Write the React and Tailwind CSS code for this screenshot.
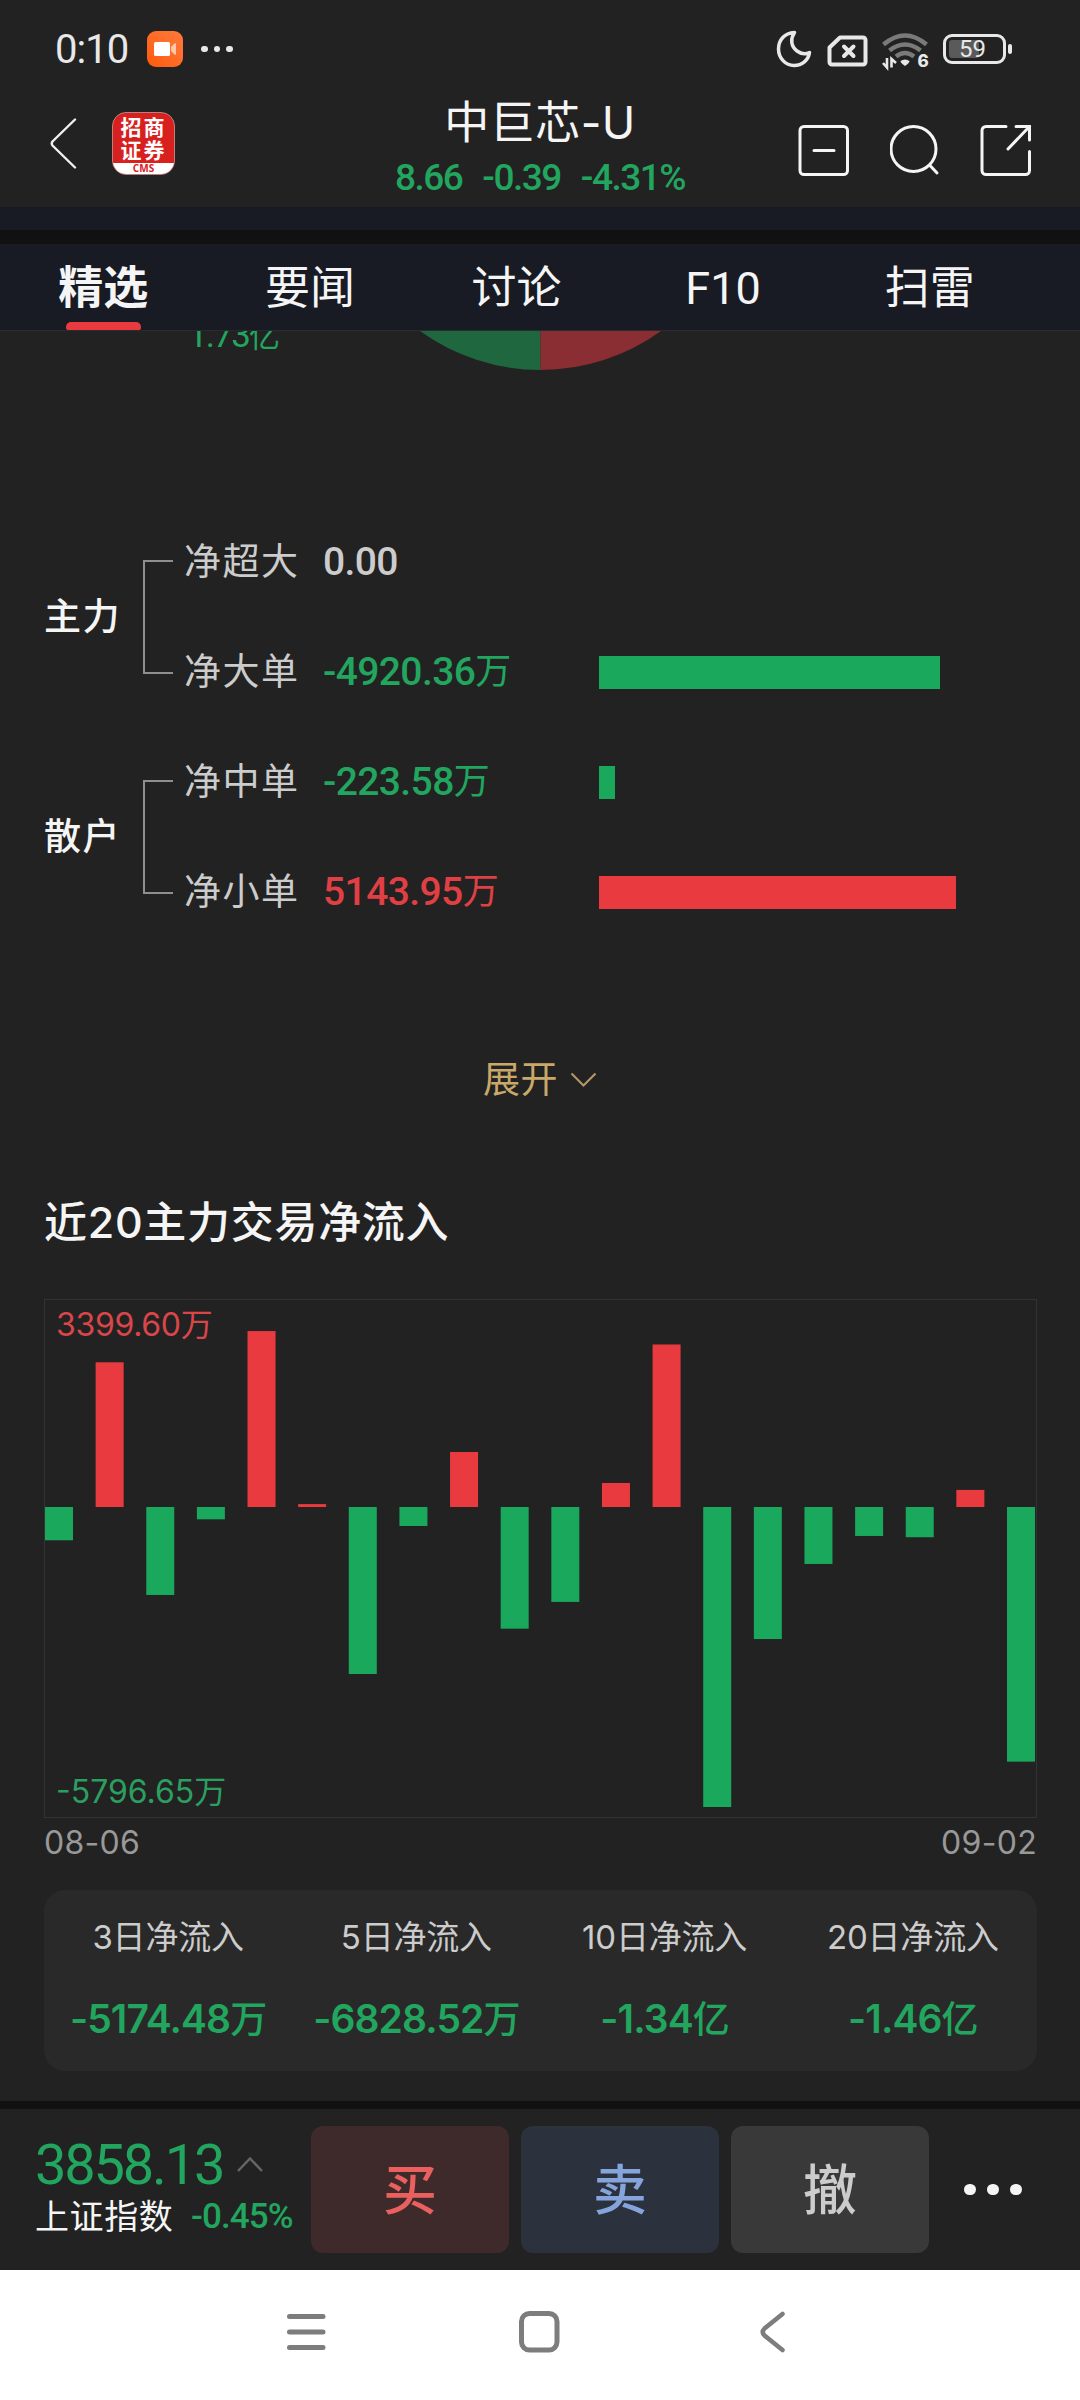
import clsx from "clsx";

const latinFont = "font-['Inter','Noto_Sans_CJK_SC',sans-serif]";
const numberFont = "font-['Roboto','Noto_Sans_CJK_SC',sans-serif]";

const tabs = ["精选", "要闻", "讨论", "F10", "扫雷"];

// Amounts are in 万, bar widths in px.
const orderGroups = [
  {
    name: "主力",
    rows: [
      { label: "净超大", value: "0.00", tone: "flat", bar: 0 },
      { label: "净大单", value: "-4920.36", unit: "万", tone: "down", bar: 341 },
    ],
  },
  {
    name: "散户",
    rows: [
      { label: "净中单", value: "-223.58", unit: "万", tone: "down", bar: 16 },
      { label: "净小单", value: "5143.95", unit: "万", tone: "up", bar: 357 },
    ],
  },
];

const dailyFlow = [
  -643, 2796, -1700, -238, 3399.6, 56, -3227, -367, 1063, -2351, -1834, 464, 3140, -5796.65, -2551, -1101, -560,
  -584, 330, -4920.36,
];

const totals = [
  { label: "3日净流入", value: "-5174.48", unit: "万" },
  { label: "5日净流入", value: "-6828.52", unit: "万" },
  { label: "10日净流入", value: "-1.34", unit: "亿" },
  { label: "20日净流入", value: "-1.46", unit: "亿" },
];

const toneText = {
  up: "text-[#e04044]",
  down: "text-[#22a55e]",
  flat: "text-[#cccccc]",
};

const toneBar = {
  up: "bg-[#e93b3f]",
  down: "bg-[#19a85c]",
  flat: "bg-transparent",
};

function StatusBar() {
  return (
    <div className="flex h-[98px] items-center pl-[55px] pr-[68px] text-[#e8e8e8]">
      <span className={clsx(numberFont, "mt-[2px] w-[92px] text-[40px] leading-none tracking-[-1px]")}>0:10</span>
      <span className="flex h-[36px] w-[36px] items-center justify-center rounded-[9px] bg-gradient-to-tr from-[#ff5a00] to-[#ff7a3a]">
        <svg width="24" height="16" viewBox="0 0 24 16">
          <rect x="1" y="1" width="16" height="14" rx="1.500" fill="#fff" />
          <path d="M18 6l4-4a1 1 0 0 1 1 1v10a1 1 0 0 1-1 1l-4-4z" fill="#ffc9a8" />
        </svg>
      </span>
      <span className="ml-[18px] flex gap-[6px]">
        <i className="size-[6.5px] rounded-full bg-[#e8e8e8]" />
        <i className="size-[6.5px] rounded-full bg-[#e8e8e8]" />
        <i className="size-[6.5px] rounded-full bg-[#e8e8e8]" />
      </span>

      <div className="ml-auto flex items-center">
        <svg width="36" height="38" viewBox="0 0 36 38" fill="none">
          <path
            d="M18.500 2.500C8 3 2.500 10.500 2.500 19c0 9 7 16.500 15.500 16.500 8 0 14.500-5.500 15.500-13-3.500 1.800-8.500 1.500-12.500-1.500-6-4.500-7-12-2.500-18.500z"
            stroke="#e8e8e8"
            strokeWidth="3.500"
            strokeLinejoin="round"
          />
        </svg>
        <svg className="ml-[15px] mt-[3px]" width="41" height="32" viewBox="0 0 41 32" fill="none">
          <path
            d="M13 2.500H36a2.500 2.500 0 0 1 2.500 2.500v22a2.500 2.500 0 0 1-2.500 2.500H5A2.500 2.500 0 0 1 2.500 27V12.500z"
            stroke="#e8e8e8"
            strokeWidth="4"
            strokeLinejoin="round"
          />
          <path d="M17 11.500l9.500 9.500M26.500 11.500l-9.500 9.500" stroke="#e8e8e8" strokeWidth="4" strokeLinecap="round" />
        </svg>
        <svg className="ml-[13px] mt-[3px] overflow-visible" width="48" height="37" viewBox="0 0 48 37" fill="none">
          <path d="M2.500 12.500Q24-5.500 45.500 12.500" stroke="#7a7a7a" strokeWidth="4.500" />
          <path d="M8.500 18.500Q24 6.500 39.500 18.500" stroke="#7a7a7a" strokeWidth="4.500" />
          <path d="M15 24.500Q24 17.500 33 24.500" stroke="#7a7a7a" strokeWidth="4.500" />
          <path d="M19.500 29q4.500-3 9 0q0 2-4.500 5q-4.500-3-4.500-5z" fill="#e8e8e8" />
          <path d="M6 26v9.500l-4-4.500M10.500 35.500V27l4.500 4" stroke="#e8e8e8" strokeWidth="2.600" />
          <text x="36.500" y="35" fill="#e8e8e8" fontSize="17" fontWeight="800" fontFamily="Inter, sans-serif">
            6
          </text>
        </svg>
        <span className="ml-[14px] flex h-[30px] w-[63px] items-center rounded-[9px] border-[3px] border-[#e8e8e8] p-[3px]">
          <i className="h-[18px] w-[30px] rounded-[3px] bg-[#5a5a5a]" />
          <span className={clsx(numberFont, "-ml-[20px] text-[24px] leading-none")}>59</span>
        </span>
        <i className="ml-[2px] h-[10px] w-[4px] rounded-[2px] bg-[#e8e8e8]" />
      </div>
    </div>
  );
}

function BrokerLogo() {
  return (
    <div className="flex h-[63px] w-[63px] flex-col overflow-hidden rounded-[14px] border border-[#b98080] bg-[#d8201f] text-center text-white">
      <div className="h-[50px] pt-[2px] font-['Noto_Sans_CJK_SC',sans-serif] text-[21px] font-bold leading-[23px] tracking-[2px]">
        <p>招商</p>
        <p>证券</p>
      </div>
      <p className="flex-1 bg-white font-['Open_Sans',sans-serif] text-[10px] font-bold leading-[11px] text-[#d8201f]">
        CMS
      </p>
    </div>
  );
}

function Header() {
  return (
    <header className="grid h-[109px] grid-cols-[1fr_auto_1fr] text-[#f5f5f5]">
      <div className="flex items-start pl-[50px] pt-[14px]">
        <svg className="mt-[6px]" width="27" height="51" viewBox="0 0 27 51" fill="none">
          <path
            d="M25 1.500L2.500 23.500q-1.500 2 0 4L25 49.500"
            stroke="#f0f0f0"
            strokeWidth="2.400"
            strokeLinecap="round"
          />
        </svg>
        <span className="ml-[35px]">
          <BrokerLogo />
        </span>
      </div>

      <div className="flex flex-col items-center">
        <h1
          className={clsx(
            latinFont,
            "mt-[2px] h-[46px] whitespace-nowrap text-[45px] leading-[46px] tracking-[0.500px]",
          )}
        >
          中巨芯-U
        </h1>
        <div
          className={clsx(
            numberFont,
            "mt-[11px] flex gap-[20px] whitespace-nowrap text-[37px] font-medium leading-[42px] tracking-[-1.500px] text-[#22a55e]",
          )}
        >
          <span>8.66</span>
          <span>-0.39</span>
          <span>-4.31%</span>
        </div>
      </div>

      <div className="flex items-start justify-end gap-[40px] pr-[48px] pt-[26px]">
        <svg width="52" height="53" viewBox="0 0 52 53" fill="none" stroke="#f5f5f5" strokeWidth="3">
          <rect x="2" y="2.500" width="47.500" height="48" rx="4" />
          <path d="M16 26.500h20" strokeLinecap="round" />
        </svg>
        <svg width="50" height="53" viewBox="0 0 50 53" fill="none" stroke="#f5f5f5" strokeWidth="3">
          <circle cx="23.500" cy="25" r="22.500" />
          <path d="M40 41.500l7 7.500" strokeLinecap="round" />
        </svg>
        <svg
          width="52"
          height="53"
          viewBox="0 0 52 53"
          fill="none"
          stroke="#f5f5f5"
          strokeWidth="3"
          strokeLinecap="round"
        >
          <path d="M26 2.500H6a4 4 0 0 0-4 4v40a4 4 0 0 0 4 4h39.500a4 4 0 0 0 4-4V27.500" />
          <path d="M36 2.500h13.500V16M49.500 2.500L28 25" />
        </svg>
      </div>
    </header>
  );
}

function TabBar() {
  return (
    <nav className="h-[87px] border-b border-[#2a2b2f] bg-[#181b23] pr-[47px]">
      <div className="grid h-full grid-cols-5">
        {tabs.map((tab, index) => (
          <div key={tab} className="flex flex-col items-center justify-between">
            <span
              className={clsx(
                numberFont,
                "h-[78px] pt-[22px] text-[45px] leading-[46px] text-[#f5f5f5]",
                index === 0 && "font-bold",
              )}
            >
              {tab}
            </span>
            {index === 0 ? <i className="h-[8px] w-[75px] rounded-t-[5px] rounded-b-[2px] bg-[#e93b3f]" /> : null}
          </div>
        ))}
      </div>
    </nav>
  );
}

// Bottom edge of the chart that is scrolled under the tab bar.
function PieTail() {
  return (
    <div className="flex h-[39px] items-start overflow-hidden pl-[188px]">
      <div
        className={clsx(numberFont, "-mt-[18px] w-[232px] text-[35px] leading-[46px] tracking-[-1.800px] text-[#22a55e]")}
      >
        1.73<span className="text-[31px]">亿</span>
      </div>
      <svg width="242" height="39" viewBox="0 0 242 39">
        <path d="M0 0A205.700 205.700 0 0 0 120.500 39V0z" fill="#1e673f" />
        <path d="M120.500 0V39A205.700 205.700 0 0 0 241 0z" fill="#8a2e33" />
      </svg>
    </div>
  );
}

function OrderGroup({ name, rows }) {
  return (
    <div className="flex h-[220px] items-center pl-[44px]">
      <strong
        className={clsx(latinFont, "w-[99px] text-[37px] font-medium leading-none tracking-[1.500px] text-[#f5f5f5]")}
      >
        {name}
      </strong>
      <i className="mt-[2px] h-[114px] w-[30px] border-2 border-r-0 border-[#8f8f8f]" />
      <div className="flex-1 pl-[11px]">
        {rows.map((row) => (
          <div key={row.label} className="flex h-[110px] items-center">
            <span className={clsx(latinFont, "w-[139px] text-[37px] leading-none tracking-[1.500px] text-[#cccccc]")}>
              {row.label}
            </span>
            <span
              className={clsx(
                numberFont,
                "mt-[2px] flex w-[276px] items-center text-[39px] font-medium leading-none tracking-[-0.600px]",
                toneText[row.tone],
              )}
            >
              {row.value}
              <span className="text-[36px] font-normal leading-none">{row.unit}</span>
            </span>
            <i className={clsx("mt-[3px] h-[33px]", toneBar[row.tone])} style={{ width: row.bar }} />
          </div>
        ))}
      </div>
    </div>
  );
}

function FlowChart() {
  const scale = 300 / 5796.65;
  const zero = 207;
  const step = (991 - 1 - 28) / (dailyFlow.length - 1);

  return (
    <div className={clsx(latinFont, "relative h-[519px] border border-[#333333] text-[32px] leading-none")}>
      <svg className="block" width="991" height="517" viewBox="0 0 991 517">
        {dailyFlow.map((value, index) => {
          const height = Math.abs(value) * scale;
          return (
            <rect
              key={index}
              x={index * step}
              y={value > 0 ? zero - height : zero}
              width="28"
              height={height}
              fill={value > 0 ? "#e93b3f" : "#19a85c"}
            />
          );
        })}
      </svg>
      <span className="absolute left-[11px] top-[9px] tracking-[-0.300px] text-[#d9464a]">3399.60万</span>
      <span className="absolute bottom-[9px] left-[11px] text-[#2b9f60]">-5796.65万</span>
    </div>
  );
}

function Totals() {
  return (
    <div className={clsx(latinFont, "mt-[22px] grid h-[181px] grid-cols-4 rounded-[21px] bg-[#292929] text-center")}>
      {totals.map((item) => (
        <div key={item.label} className="whitespace-nowrap pt-[27px]">
          <p className="text-[33px] leading-[40px] tracking-[-0.200px] text-[#cccccc]">{item.label}</p>
          <p className="mt-[38px] text-[39px] font-semibold leading-[48px] tracking-[-0.900px] text-[#22a55e]">
            {item.value}
            <span className="text-[37px] font-medium">{item.unit}</span>
          </p>
        </div>
      ))}
    </div>
  );
}

function TradeButton({ className, children }) {
  return (
    <button
      type="button"
      className={clsx(
        "flex h-[127px] w-[198px] items-center justify-center rounded-[12px] pb-[6px] font-['Noto_Sans_CJK_SC',sans-serif] text-[54px] font-medium leading-none",
        className,
      )}
    >
      {children}
    </button>
  );
}

function TradeBar() {
  return (
    <footer className="flex h-[169px] items-center border-t-[8px] border-[#111111] pl-[35px]">
      <div className="w-[276px] pb-[8px]">
        <div className="flex h-[62px] items-center">
          <span className={clsx(numberFont, "w-[201px] text-[56px] leading-none tracking-[-2.200px] text-[#22a55e]")}>
            3858.13
          </span>
          <svg width="28" height="17" viewBox="0 0 28 17" fill="none">
            <path d="M2 15L14 2.500 26 15" stroke="#666666" strokeWidth="2.500" />
          </svg>
        </div>
        <div className="flex h-[42px] items-center">
          <span className={clsx(latinFont, "w-[156px] text-[34px] leading-none tracking-[0.600px] text-[#f5f5f5]")}>
            上证指数
          </span>
          <span className={clsx(numberFont, "text-[35px] font-medium leading-none tracking-[-0.900px] text-[#22a55e]")}>
            -0.45%
          </span>
        </div>
      </div>
      <div className="flex gap-[12px]">
        <TradeButton className="bg-[#3e2a2a] text-[#e9605f]">买</TradeButton>
        <TradeButton className="bg-[#2b313d] text-[#86a4dc]">卖</TradeButton>
        <TradeButton className="bg-[#393939] text-[#cccccc]">撤</TradeButton>
      </div>
      <div className="ml-[35px] flex gap-[11.500px]">
        <i className="size-[11.500px] rounded-full bg-[#f5f5f5]" />
        <i className="size-[11.500px] rounded-full bg-[#f5f5f5]" />
        <i className="size-[11.500px] rounded-full bg-[#f5f5f5]" />
      </div>
    </footer>
  );
}

function SystemNav() {
  return (
    <div className="flex h-[130px] items-start bg-white pl-[287px] pt-[41px]">
      <svg width="39" height="42" viewBox="0 0 39 42" stroke="#7d7d7d" strokeWidth="5" strokeLinecap="round">
        <path d="M2.500 5.500h33.500M2.500 21h33.500M2.500 36.500h33.500" />
      </svg>
      <svg className="ml-[193px]" width="41" height="42" viewBox="0 0 41 42" fill="none">
        <rect x="2.500" y="2.500" width="35.500" height="36.500" rx="8" stroke="#7d7d7d" strokeWidth="5" />
      </svg>
      <svg className="ml-[200px]" width="26" height="42" viewBox="0 0 26 42" fill="none">
        <path
          d="M22.500 3L4.500 17.500q-3.500 3.500 0 7L22.500 39"
          stroke="#7d7d7d"
          strokeWidth="4.500"
          strokeLinecap="round"
        />
      </svg>
    </div>
  );
}

export default function App() {
  return (
    <div className="flex h-[2400px] w-[1080px] flex-col overflow-hidden bg-[#222222]">
      <StatusBar />
      <Header />
      <div className="h-[37px] border-b-[14px] border-[#111111] bg-[#181b23]" />
      <TabBar />

      <main className="h-[1770px]">
        <PieTail />
        <div className="pt-[136px]">
          {orderGroups.map((group) => (
            <OrderGroup key={group.name} {...group} />
          ))}
        </div>

        <div className="mt-[78px] flex h-[110px] items-center justify-center gap-[12px] text-[#c9a86a]">
          <span className={clsx(latinFont, "text-[37px] leading-none tracking-[0.500px]")}>展开</span>
          <svg className="mt-[2px]" width="27" height="16" viewBox="0 0 27 16" fill="none">
            <path d="M1.500 1.500L13.500 13.500 25.500 1.500" stroke="#b39567" strokeWidth="2.200" />
          </svg>
        </div>

        <section className="pl-[44px] pr-[43px]">
          <h2
            className={clsx(
              latinFont,
              "mt-[58px] flex h-[60px] items-center text-[43px] font-medium leading-none tracking-[0.700px] text-[#f5f5f5]",
            )}
          >
            近20主力交易净流入
          </h2>
          <div className="pt-[47px]">
            <FlowChart />
          </div>
          <div
            className={clsx(
              latinFont,
              "flex h-[50px] items-center justify-between text-[32px] tracking-[0.300px] text-[#999999]",
            )}
          >
            <span>08-06</span>
            <span>09-02</span>
          </div>
          <Totals />
        </section>
      </main>

      <TradeBar />
      <SystemNav />
    </div>
  );
}
